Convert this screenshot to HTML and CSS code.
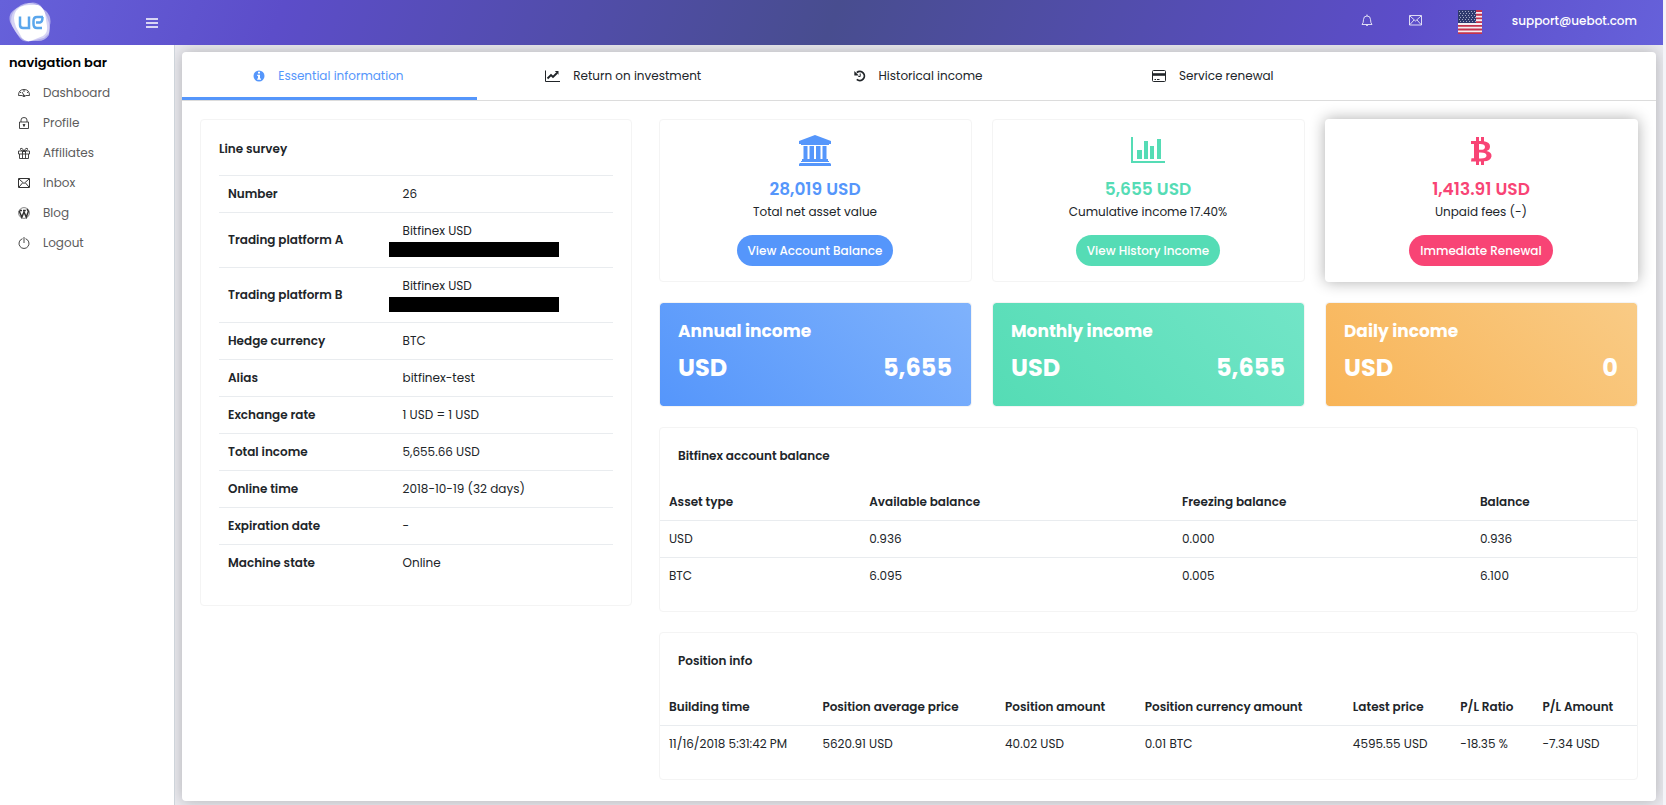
FILE: index.html
```html
<!DOCTYPE html>
<html lang="en">
<head>
<meta charset="utf-8">
<title>UEBOT – Essential information</title>
<meta name="viewport" content="width=device-width, initial-scale=1">
<link rel="stylesheet" href="styles.css">
</head>
<body>
<header class="topbar">
  <a class="logo" href="#" aria-label="UE">
    <svg viewBox="0 0 44 42" width="44" height="42" aria-hidden="true">
      <path d="M12 3Q20-1 28 3L37 9Q43 15 41 23L40 33Q36 39 29 39L18 39Q10 36 6 29L1 20Q-1 12 5 8Z" fill="#fff" fill-opacity=".5"/>
      <path d="M8 6L20 1Q27-1 32 4L38 15Q42 24 40 31L35 36L22 39Q14 41 10 35L3 24Q0 13 8 6Z" fill="#fff" fill-opacity=".45"/>
      <path d="M11 5Q15 3 20 3L29 3Q34 5 36 11L38 24Q39 31 34 34L24 38Q17 41 13 36L7 25Q3 15 7 9Z" fill="#fff"/>
      <path d="M11 14.500V23Q11 26 14 26H20V14.500M34 15H28Q24.500 15 24.500 19V22Q24.500 26 28 26H33M27 20.500H31Q33.500 20 33.500 15" fill="none" stroke="#5aa6ec" stroke-width="2.500"/>
    </svg>
  </a>
  <button class="menu-btn" type="button" aria-label="Toggle menu">
    <svg viewBox="0 0 12 10" width="12" height="10" aria-hidden="true"><path d="M0 1h12M0 5h12M0 9h12" stroke="#fff" stroke-width="1.400"/></svg>
  </button>
  <div class="tools">
    <a href="#" aria-label="Notifications"><svg viewBox="0 0 12 13" width="12" height="13" aria-hidden="true"><path d="M1 10.500Q2.500 9 2.500 5.500Q2.500 2 6 2T9.500 5.500Q9.500 9 11 10.500ZM6 .5V2M4.800 10.800Q6 12.800 7.200 10.800" fill="none" stroke="#fff" stroke-opacity=".8"/></svg></a>
    <a href="#" aria-label="Messages"><svg viewBox="0 0 13 11" width="13" height="11" aria-hidden="true"><path d="M.5.5h12v9.500H.5ZM1 1l5.500 5L12 1M1 9.500l4-4.500M12 9.500L8 5" fill="none" stroke="#fff" stroke-opacity=".8"/></svg></a>
    <a class="flag" href="#" aria-label="Language: English (US)"><svg viewBox="0 0 24 24" width="24" height="24" aria-hidden="true"><path fill="#f4eef2" d="M0 0h24v24H0z"/><path d="M0 1h24M0 4.700h24M0 8.400h24M0 12.100h24M0 15.800h24M0 19.500h24M0 23.100h24" stroke="#c4324c" stroke-width="1.850"/><path fill="#2f3a6e" d="M0 0h18v13H0z"/><path d="M1 1.500h16M2 3.500h16M1 5.500h16M2 7.500h16M1 9.500h16M2 11.500h16" stroke="#a5abc6" stroke-dasharray="1 2"/></svg></a>
    <a class="account" href="#">support@uebot.com</a>
  </div>
</header>
<div class="shell">
  <nav class="sidebar" aria-label="Main">
    <h2 class="nav-title">navigation bar</h2>
    <ul class="nav-list">
      <li><a href="#"><svg viewBox="0 0 12 12" width="12" height="12" aria-hidden="true"><path d="M.5 8.500Q.5 2.500 6 2.500T11.500 8.500H7.500M4.500 8.500H.5M6 2.500V5M6 8.500L4 5M2 5l1 1M10 5L9 6M4.700 9Q6 7 7.300 9Q6 10.500 4.700 9" fill="none" stroke="currentColor" stroke-width=".9"/></svg>Dashboard</a></li>
      <li><a href="#"><svg viewBox="0 0 12 12" width="12" height="12" aria-hidden="true"><path d="M1.500 5h9v6.500h-9ZM3 5V3Q3 .5 6 .5T9 3V5M5 7.500H7L6 9.500Z" fill="none" stroke="currentColor" stroke-width=".9"/></svg>Profile</a></li>
      <li><a href="#"><svg viewBox="0 0 12 12" width="12" height="12" aria-hidden="true"><path d="M.5 4h11v3H.5ZM1.500 7v4.500h9V7M4.500 4v7.500M7.500 4v7.500M6 4Q2 4 2.500 1.500Q4 0 6 4Q8 0 9.500 1.500Q10 4 6 4L8 6M6 4L4 6" fill="none" stroke="currentColor" stroke-width=".9"/></svg>Affiliates</a></li>
      <li><a href="#"><svg viewBox="0 0 12 12" width="12" height="12" aria-hidden="true"><path d="M.5 1.500h11v9H.5ZM1 2l5 4.500L11 2M1 10l3.500-4M11 10L7.500 6" fill="none" stroke="currentColor"/></svg>Inbox</a></li>
      <li><a href="#"><svg viewBox="0 0 12 12" width="12" height="12" aria-hidden="true"><circle cx="6" cy="6" r="5.400" fill="#fff" stroke="currentColor" stroke-width=".6"/><path d="M1.200 4L3.800 10.200L6 5L8.300 10.200L10.300 4.500Q9.800 3 9 2M1.500 3.500H4M5 3.500H7.800" fill="none" stroke="currentColor" stroke-width="1.500"/></svg>Blog</a></li>
      <li><a href="#"><svg viewBox="0 0 12 12" width="12" height="12" aria-hidden="true"><path d="M4.500 1.700A5 5 0 1 0 7.500 1.700M6 0V6" fill="none" stroke="currentColor" stroke-width=".9"/></svg>Logout</a></li>
    </ul>
  </nav>
  <main class="content">
    <div class="panel">
      <div class="tabs" role="tablist">
        <button class="tab active" role="tab" aria-selected="true" type="button"><svg viewBox="0 0 12 12" width="12" height="12" aria-hidden="true"><circle cx="6" cy="6" r="5.500" fill="currentColor"/><path d="M5 1.800h2v1.700H5ZM4.200 4.700H7V8.500H8V9.800H4.200V8.500H5V6H4.200Z" fill="#fff"/></svg>Essential information</button>
        <button class="tab" role="tab" aria-selected="false" type="button"><svg viewBox="0 0 15 12" width="15" height="12" aria-hidden="true"><path d="M.5.500V11.500H15" fill="none" stroke="currentColor"/><path d="M2.500 8.500L6 5L8 7L12 3" fill="none" stroke="currentColor" stroke-width="1.900"/><path d="M9.800 1H13.500V4.700Z" fill="currentColor"/></svg>Return on investment</button>
        <button class="tab" role="tab" aria-selected="false" type="button"><svg viewBox="0 0 12 12" width="12" height="12" aria-hidden="true"><path d="M2.800 2.700A4.500 4.500 0 1 1 2.800 9.300" fill="none" stroke="currentColor" stroke-width="1.800"/><path d="M.3 1V5.500H4.800Z" fill="currentColor"/><path d="M6.200 3.500V6.500H4.300" fill="none" stroke="currentColor"/></svg>Historical income</button>
        <button class="tab" role="tab" aria-selected="false" type="button"><svg viewBox="0 0 14 12" width="14" height="12" aria-hidden="true"><rect x=".5" y=".5" width="13" height="11" rx="1" fill="none" stroke="currentColor"/><path d="M1 4.500H13" stroke="currentColor" stroke-width="2.600"/><path d="M2.500 9.500H4M5 9.500H7.500" stroke="currentColor"/></svg>Service renewal</button>
      </div>
      <div class="panel-body">
        <section class="card survey">
          <h3>Line survey</h3>
          <table class="facts">
            <tr><th scope="row">Number</th><td>26</td></tr>
            <tr><th scope="row">Trading platform A</th><td><div class="platform">Bitfinex USD<span class="redacted"></span></div></td></tr>
            <tr><th scope="row">Trading platform B</th><td><div class="platform">Bitfinex USD<span class="redacted"></span></div></td></tr>
            <tr><th scope="row">Hedge currency</th><td>BTC</td></tr>
            <tr><th scope="row">Alias</th><td>bitfinex-test</td></tr>
            <tr><th scope="row">Exchange rate</th><td>1 USD = 1 USD</td></tr>
            <tr><th scope="row">Total income</th><td>5,655.66 USD</td></tr>
            <tr><th scope="row">Online time</th><td>2018-10-19 (32 days)</td></tr>
            <tr><th scope="row">Expiration date</th><td>-</td></tr>
            <tr><th scope="row">Machine state</th><td>Online</td></tr>
          </table>
        </section>
        <div class="details">
          <div class="trio">
            <section class="card stat blue">
              <svg viewBox="0 0 32 31" width="32" height="31" aria-hidden="true"><path fill="currentColor" d="M16 0L32 6V9H30V10H2V9H0V6ZM4.500 11H8.500V24H10.500V11H15V24H17V11H21.500V24H23.500V11H27.500V24H29V26H30V27H2V26H3V24H4.500ZM1 28H31L32 29V31H0V29Z"/></svg>
              <strong>28,019 USD</strong><p>Total net asset value</p><button type="button">View Account Balance</button>
            </section>
            <section class="card stat green">
              <svg viewBox="0 0 34 31" width="34" height="31" aria-hidden="true"><path fill="currentColor" d="M0 2H2V26H34V28H0ZM6 15H11V24H6ZM13 6H17V24H13ZM19 11H23V24H19ZM26 4H30V24H26Z"/></svg>
              <strong>5,655 USD</strong><p>Cumulative income 17.40%</p><button type="button">View History Income</button>
            </section>
            <section class="card stat pink raised">
              <svg viewBox="0 0 22 31" width="22" height="31" aria-hidden="true"><path fill="currentColor" fill-rule="evenodd" d="M6 2H9V6H11V2H14V6.300Q20 7.200 20 11.500Q20 15 16.500 16Q22 17.200 21.500 21.500Q20.500 26 14 26.300V30H11V26.400H9V30H6V26.400H1L1.500 23.300H4V9H1V6H6ZM9 9V14.700Q15 15.200 15 11.900T9 9ZM9 17.500V23.500Q16.500 24 16.500 20.500T9 17.500Z"/></svg>
              <strong>1,413.91 USD</strong><p>Unpaid fees (-)</p><button type="button">Immediate Renewal</button>
            </section>
          </div>
          <div class="trio">
            <section class="income annual"><h3>Annual income</h3><div><span>USD</span><span>5,655</span></div></section>
            <section class="income monthly"><h3>Monthly income</h3><div><span>USD</span><span>5,655</span></div></section>
            <section class="income daily"><h3>Daily income</h3><div><span>USD</span><span>0</span></div></section>
          </div>
          <section class="card listing">
            <h3>Bitfinex account balance</h3>
            <table class="balance">
              <thead><tr><th scope="col">Asset type</th><th scope="col">Available balance</th><th scope="col">Freezing balance</th><th scope="col">Balance</th></tr></thead>
              <tbody><tr><td>USD</td><td>0.936</td><td>0.000</td><td>0.936</td></tr>
              <tr><td>BTC</td><td>6.095</td><td>0.005</td><td>6.100</td></tr></tbody>
            </table>
          </section>
          <section class="card listing">
            <h3>Position info</h3>
            <table class="positions">
              <thead><tr><th scope="col">Building time</th><th scope="col">Position average price</th><th scope="col">Position amount</th><th scope="col">Position currency amount</th><th scope="col">Latest price</th><th scope="col">P/L Ratio</th><th scope="col">P/L Amount</th></tr></thead>
              <tbody><tr><td>11/16/2018 5:31:42 PM</td><td>5620.91 USD</td><td>40.02 USD</td><td>0.01 BTC</td><td>4595.55 USD</td><td>-18.35 %</td><td>-7.34 USD</td></tr></tbody>
            </table>
          </section>
        </div>
      </div>
    </div>
  </main>
</div>
</body>
</html>
```

FILE: styles.css
```css
* { box-sizing: border-box; }
html { min-height: 100%; background: #f4f4f8; }
body {
  margin: 0;
  padding-right: 3px;
  min-height: 100vh;
  display: flex;
  flex-direction: column;
  font-family: Poppins, Inter, "Liberation Sans", sans-serif;
  font-size: 12px;
  line-height: 18px;
  color: #212529;
}
h2, h3, p, ul { margin: 0; padding: 0; }
a { color: inherit; text-decoration: none; }
button { font: inherit; border: 0; padding: 0; background: none; cursor: pointer; }
svg { display: block; flex: none; }

.topbar {
  height: 45px;
  display: flex;
  align-items: center;
  padding: 0 26px 0 9px;
  background: linear-gradient(110deg, #6661da 0%, #5c4dc9 17%, #484d8f 50%, #5c4dc9 84%, #6661da 100%);
}
.logo { width: 137px; }
.tools { margin-left: auto; display: flex; align-items: center; color: #fff; }
.tools a { margin-left: 30px; padding-bottom: 4px; }
.tools a:nth-child(2), .tools a:nth-child(3) { margin-left: 36px; }
.tools .flag { padding-bottom: 2px; }
.account { font-weight: 500; }

.shell { flex: 1; display: flex; }
.sidebar { width: 175px; flex: none; background: #fff; border-right: 1px solid #ced4da; }
.nav-title { padding: 9px 9px 6px; font-size: 13px; line-height: 18px; font-weight: 600; color: #000; }
.nav-list { list-style: none; }
.nav-list a { display: flex; align-items: center; gap: 13px; padding: 6px 18px; line-height: 18px; color: #5c5c5c; }
.nav-list svg { color: #333; }

.content { flex: 1; min-width: 0; padding: 7px 7px 4px; background: #ebebf0; overflow: hidden; }
.panel { background: #fff; border-radius: 4px; box-shadow: 0 0 15px rgba(0, 0, 0, .25); }
.tabs { display: flex; border-bottom: 1px solid #dcdcdc; }
.tab {
  width: 20%;
  height: 48px;
  display: flex;
  align-items: center;
  justify-content: center;
  gap: 13px;
  padding: 2px 2px 0 0;
  color: #212529;
  border-bottom: 3px solid transparent;
}
.tab.active { color: #5596fb; border-color: #5596fb; }

.panel-body {
  display: grid;
  grid-template-columns: 432fr 979fr;
  column-gap: 27px;
  align-items: start;
  padding: 18px 18px 21px;
}
.card { border: 1px solid #f4f4f4; border-radius: 4px; background: #fff; }
.card h3 { font-size: 12px; line-height: 18px; font-weight: 600; }
table { width: 100%; border-collapse: separate; border-spacing: 0; table-layout: fixed; }
th, td { padding: 9px; text-align: left; }
th { font-weight: 600; }

.survey { padding: 20px 18px 24px; }
.survey h3 { margin-bottom: 17px; }
.facts th, .facts td { border-top: 1px solid #e9ecef; }
.facts th { width: 44.3%; }
.platform { position: relative; height: 36px; }
.redacted { position: absolute; left: -14px; top: 20px; width: 170px; height: 15px; background: #000; }

.details { display: grid; gap: 20px; min-width: 0; }
.trio { display: grid; grid-template-columns: repeat(3, 1fr); gap: 20px; }
.stat { display: flex; flex-direction: column; align-items: center; padding: 15px 16px 15px 15px; }
.stat strong { margin-top: 10px; font-size: 17px; line-height: 26px; font-weight: 600; }
.stat p { margin: 1px 0 14px; color: #212529; }
.stat button { height: 31px; padding: 0 11px; border-radius: 16px; font-weight: 500; color: #fff; }
.blue { color: #5596fb; }
.blue button { background: #5596fb; }
.green { color: #55dcb5; }
.green button { background: #55dcb5; }
.pink { color: #f84475; }
.pink button { background: #f84475; }
.raised { border-color: transparent; box-shadow: 0 0 15px rgba(0, 0, 0, .32); }

.income { padding: 18px 19px 23px 18px; border: 1px solid #f4f4f4; border-radius: 4px; background-clip: padding-box; color: #fff; font-weight: 700; }
.income h3 { font-size: 17px; line-height: 20px; }
.income div { display: flex; justify-content: space-between; margin-top: 12px; font-size: 24px; line-height: 30px; }
.annual { background-image: linear-gradient(45deg, #5596fb, #7fb2fc); }
.monthly { background-image: linear-gradient(45deg, #55dcb5, #72e5c7); }
.daily { background-image: linear-gradient(45deg, #f8b457, #f9cb85); }

.listing { padding: 19px 0 17px; }
.listing h3 { padding: 0 18px; margin-bottom: 19px; }
.listing tbody td { border-top: 1px solid #e9ecef; }
.balance th:nth-child(1) { width: 20.5%; }
.balance th:nth-child(2) { width: 32%; }
.balance th:nth-child(3) { width: 30.5%; }
.positions th:nth-child(1) { width: 15.7%; }
.positions th:nth-child(2) { width: 18.7%; }
.positions th:nth-child(3) { width: 14.3%; }
.positions th:nth-child(4) { width: 21.3%; }
.positions th:nth-child(5) { width: 11%; }
.positions th:nth-child(6) { width: 8.4%; }
```
